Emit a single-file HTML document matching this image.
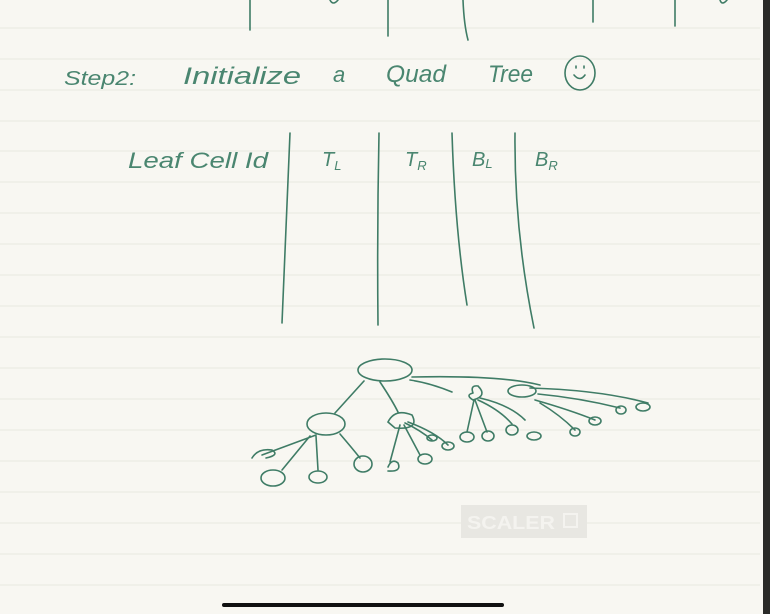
<!DOCTYPE html>
<html><head><meta charset="utf-8"><style>
html,body{margin:0;padding:0;width:770px;height:614px;overflow:hidden;background:#f8f7f2}
svg{display:block}
text{font-family:"Liberation Sans",sans-serif;fill:#4a8670;font-style:italic}
</style></head><body>
<svg width="770" height="614" viewBox="0 0 770 614">
<rect width="770" height="614" fill="#f8f7f2"/>
<g stroke="#eeede6" stroke-width="1.5">
<line x1="0" y1="28" x2="760" y2="28"/><line x1="0" y1="59" x2="760" y2="59"/>
<line x1="0" y1="90" x2="760" y2="90"/><line x1="0" y1="121" x2="760" y2="121"/>
<line x1="0" y1="151" x2="760" y2="151"/><line x1="0" y1="182" x2="760" y2="182"/>
<line x1="0" y1="213" x2="760" y2="213"/><line x1="0" y1="244" x2="760" y2="244"/>
<line x1="0" y1="275" x2="760" y2="275"/><line x1="0" y1="306" x2="760" y2="306"/>
<line x1="0" y1="337" x2="760" y2="337"/><line x1="0" y1="368" x2="760" y2="368"/>
<line x1="0" y1="399" x2="760" y2="399"/><line x1="0" y1="430" x2="760" y2="430"/>
<line x1="0" y1="461" x2="760" y2="461"/><line x1="0" y1="492" x2="760" y2="492"/>
<line x1="0" y1="523" x2="760" y2="523"/><line x1="0" y1="554" x2="760" y2="554"/>
<line x1="0" y1="585" x2="760" y2="585"/>
</g>
<rect x="763" y="0" width="7" height="614" fill="#2a2a28"/>
<g fill="none" stroke="#3f7c66" stroke-width="1.6" stroke-linecap="round">
<path d="M250 0 L250 30"/><path d="M388 0 L388 36"/><path d="M463 0 Q464 25 468 40"/>
<path d="M593 0 L593 22"/><path d="M675 0 L675 26"/>
<path d="M330 0 Q333 6 338 0"/><path d="M720 0 Q722 6 727 0"/>
<ellipse cx="580" cy="73" rx="15" ry="17"/><path d="M574 75 Q580 82 585 75"/>
<path d="M576 66 L576 68 M584 66 L584 68"/>
<path d="M290 133 Q286 230 282 323"/><path d="M379 133 Q377 230 378 325"/>
<path d="M452 133 Q455 230 467 305"/><path d="M515 133 Q514 230 534 328"/>
<ellipse cx="385" cy="370" rx="27" ry="11"/>
<path d="M412 377 Q500 375 540 385"/><path d="M410 380 Q430 383 452 392"/>
<path d="M364 381 L335 413"/><path d="M380 382 Q392 400 398 412"/>
<ellipse cx="326" cy="424" rx="19" ry="11"/>
<path d="M388 422 Q395 408 412 415 Q420 430 395 428 Z"/>
<path d="M473 393 Q470 385 478 386 Q488 396 473 400 Q465 395 473 393"/>
<ellipse cx="522" cy="391" rx="14" ry="6"/>
<path d="M530 388 Q600 390 648 403"/><path d="M538 394 Q580 398 620 408"/>
<path d="M535 400 Q570 410 595 420"/><path d="M540 403 Q560 415 575 430"/>
<path d="M474 400 L467 432 M475 400 L487 432 M478 400 Q500 410 512 424 M480 398 Q510 405 525 420"/>
<ellipse cx="467" cy="437" rx="7" ry="5"/><ellipse cx="488" cy="436" rx="6" ry="5"/>
<ellipse cx="512" cy="430" rx="6" ry="5"/><ellipse cx="534" cy="436" rx="7" ry="4"/>
<ellipse cx="575" cy="432" rx="5" ry="4"/><ellipse cx="595" cy="421" rx="6" ry="4"/>
<ellipse cx="621" cy="410" rx="5" ry="4"/><ellipse cx="643" cy="407" rx="7" ry="4"/>
<path d="M400 425 L390 462 M404 425 L420 455 M405 423 Q420 430 432 440 M408 422 Q435 432 448 445"/>
<ellipse cx="425" cy="459" rx="7" ry="5"/><path d="M388 467 Q392 458 398 463 Q402 472 388 471"/>
<ellipse cx="448" cy="446" rx="6" ry="4"/><ellipse cx="432" cy="438" rx="5" ry="3"/>
<path d="M316 435 L262 455 M310 436 L282 470 M316 436 L318 470 M340 434 Q352 448 360 458"/>
<path d="M252 458 Q258 448 272 450 Q280 455 266 458"/>
<ellipse cx="273" cy="478" rx="12" ry="8"/><ellipse cx="318" cy="477" rx="9" ry="6"/>
<ellipse cx="363" cy="464" rx="9" ry="8"/>
</g>
<text x="64" y="85" font-size="20" textLength="72" lengthAdjust="spacingAndGlyphs">Step2:</text>
<text x="183" y="84" font-size="24" textLength="118" lengthAdjust="spacingAndGlyphs">Initialize</text>
<text x="333" y="82" font-size="22">a</text>
<text x="386" y="82" font-size="24" textLength="60" lengthAdjust="spacingAndGlyphs">Quad</text>
<text x="488" y="82" font-size="24" textLength="45" lengthAdjust="spacingAndGlyphs">Tree</text>
<text x="128" y="168" font-size="22" textLength="140" lengthAdjust="spacingAndGlyphs">Leaf Cell Id</text>
<text x="322" y="166" font-size="20">T<tspan font-size="13" dy="4">L</tspan></text>
<text x="405" y="166" font-size="20">T<tspan font-size="13" dy="4">R</tspan></text>
<text x="472" y="166" font-size="20">B<tspan font-size="13" dy="2">L</tspan></text>
<text x="535" y="166" font-size="20">B<tspan font-size="13" dy="4">R</tspan></text>
<rect x="461" y="505" width="126" height="33" fill="#e8e7e2"/>
<text x="467" y="529" font-size="18" font-weight="bold" style="font-style:normal;fill:#f4f3ef" textLength="88" lengthAdjust="spacingAndGlyphs">SCALER</text>
<rect x="564" y="514" width="13" height="13" fill="none" stroke="#f4f3ef" stroke-width="2"/>
<rect x="222" y="603" width="282" height="4" rx="2" fill="#111"/>
</svg>
</body></html>
